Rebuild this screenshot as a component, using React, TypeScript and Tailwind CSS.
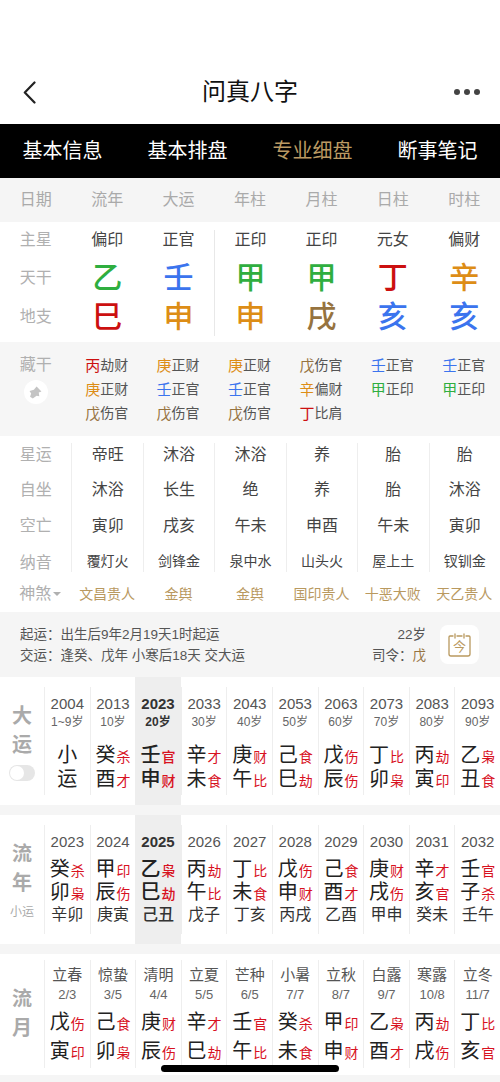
const FONT = "font-['Liberation_Sans','Noto_Sans_CJK_SC',sans-serif]";

const GREEN = "text-[#2fae3f]";
const BLUE = "text-[#3b74ee]";
const RED = "text-[#cc1010]";
const ORANGE = "text-[#dd8d16]";
const BROWN = "text-[#96733f]";

const COLUMNS = ["流年", "大运", "年柱", "月柱", "日柱", "时柱"];
const STARS = ["偏印", "正官", "正印", "正印", "元女", "偏财"];
const STEMS: [string, string][] = [["乙", GREEN], ["壬", BLUE], ["甲", GREEN], ["甲", GREEN], ["丁", RED], ["辛", ORANGE]];
const BRANCHES: [string, string][] = [["巳", RED], ["申", ORANGE], ["申", ORANGE], ["戌", BROWN], ["亥", BLUE], ["亥", BLUE]];

const HIDDEN: [string, string, string][][] = [
  [["丙", RED, "劫财"], ["庚", ORANGE, "正财"], ["戊", BROWN, "伤官"]],
  [["庚", ORANGE, "正财"], ["壬", BLUE, "正官"], ["戊", BROWN, "伤官"]],
  [["庚", ORANGE, "正财"], ["壬", BLUE, "正官"], ["戊", BROWN, "伤官"]],
  [["戊", BROWN, "伤官"], ["辛", ORANGE, "偏财"], ["丁", RED, "比肩"]],
  [["壬", BLUE, "正官"], ["甲", GREEN, "正印"]],
  [["壬", BLUE, "正官"], ["甲", GREEN, "正印"]],
];

const LOWER = [
  { label: "星运", size: "text-[16px]", cell: "mt-[7px] pb-[7px]", values: ["帝旺", "沐浴", "沐浴", "养", "胎", "胎"] },
  { label: "自坐", size: "text-[16px]", cell: "", values: ["沐浴", "长生", "绝", "养", "胎", "沐浴"] },
  { label: "空亡", size: "text-[16px]", cell: "", values: ["寅卯", "戌亥", "午未", "申酉", "午未", "寅卯"] },
  { label: "纳音", size: "text-[14px]", cell: "mb-[9px] pt-[7px]", values: ["覆灯火", "剑锋金", "泉中水", "山头火", "屋上土", "钗钏金"] },
];
const SHENSHA = ["文昌贵人", "金舆", "金舆", "国印贵人", "十恶大败", "天乙贵人"];

type Cell = { top: string; sub: string; a: string; ag: string; b: string; bg: string; c?: string; on?: boolean };

const DAYUN: Cell[] = [
  { top: "2004", sub: "1~9岁", a: "小", ag: "", b: "运", bg: "" },
  { top: "2013", sub: "10岁", a: "癸", ag: "杀", b: "酉", bg: "才" },
  { top: "2023", sub: "20岁", a: "壬", ag: "官", b: "申", bg: "财", on: true },
  { top: "2033", sub: "30岁", a: "辛", ag: "才", b: "未", bg: "食" },
  { top: "2043", sub: "40岁", a: "庚", ag: "财", b: "午", bg: "比" },
  { top: "2053", sub: "50岁", a: "己", ag: "食", b: "巳", bg: "劫" },
  { top: "2063", sub: "60岁", a: "戊", ag: "伤", b: "辰", bg: "伤" },
  { top: "2073", sub: "70岁", a: "丁", ag: "比", b: "卯", bg: "枭" },
  { top: "2083", sub: "80岁", a: "丙", ag: "劫", b: "寅", bg: "印" },
  { top: "2093", sub: "90岁", a: "乙", ag: "枭", b: "丑", bg: "食" },
];

const LIUNIAN: Cell[] = [
  { top: "2023", sub: "", a: "癸", ag: "杀", b: "卯", bg: "枭", c: "辛卯" },
  { top: "2024", sub: "", a: "甲", ag: "印", b: "辰", bg: "伤", c: "庚寅" },
  { top: "2025", sub: "", a: "乙", ag: "枭", b: "巳", bg: "劫", c: "己丑", on: true },
  { top: "2026", sub: "", a: "丙", ag: "劫", b: "午", bg: "比", c: "戊子" },
  { top: "2027", sub: "", a: "丁", ag: "比", b: "未", bg: "食", c: "丁亥" },
  { top: "2028", sub: "", a: "戊", ag: "伤", b: "申", bg: "财", c: "丙戌" },
  { top: "2029", sub: "", a: "己", ag: "食", b: "酉", bg: "才", c: "乙酉" },
  { top: "2030", sub: "", a: "庚", ag: "财", b: "戌", bg: "伤", c: "甲申" },
  { top: "2031", sub: "", a: "辛", ag: "才", b: "亥", bg: "官", c: "癸未" },
  { top: "2032", sub: "", a: "壬", ag: "官", b: "子", bg: "杀", c: "壬午" },
];

const LIUYUE: Cell[] = [
  { top: "立春", sub: "2/3", a: "戊", ag: "伤", b: "寅", bg: "印" },
  { top: "惊蛰", sub: "3/5", a: "己", ag: "食", b: "卯", bg: "枭" },
  { top: "清明", sub: "4/4", a: "庚", ag: "财", b: "辰", bg: "伤" },
  { top: "立夏", sub: "5/5", a: "辛", ag: "才", b: "巳", bg: "劫" },
  { top: "芒种", sub: "6/5", a: "壬", ag: "官", b: "午", bg: "比" },
  { top: "小暑", sub: "7/7", a: "癸", ag: "杀", b: "未", bg: "食" },
  { top: "立秋", sub: "8/7", a: "甲", ag: "印", b: "申", bg: "财" },
  { top: "白露", sub: "9/7", a: "乙", ag: "枭", b: "酉", bg: "才" },
  { top: "寒露", sub: "10/8", a: "丙", ag: "劫", b: "戌", bg: "伤" },
  { top: "立冬", sub: "11/7", a: "丁", ag: "比", b: "亥", bg: "官" },
];

function Ganzhi({ char, god, rowClass }: { char: string; god: string; rowClass: string }) {
  return (
    <div className={`flex items-end justify-center gap-[1px] ${rowClass}`}>
      <span className="text-[20px] leading-none text-[#222]">{char}</span>
      {god && <span className="text-[14px] leading-none mb-[1px] text-[#d8121f]">{god}</span>}
    </div>
  );
}

function Band({ title, height, children }: { title: React.ReactNode; height: string; children: React.ReactNode }) {
  return (
    <section className={`grid grid-cols-[44px_repeat(10,1fr)] bg-white py-[10px] ${height}`}>
      <div className="flex flex-col items-center justify-center text-[#aaa]">{title}</div>
      {children}
    </section>
  );
}

function DayunCell({ cell }: { cell: Cell }) {
  return (
    <div className={`border-l border-[#eee] text-center ${cell.on ? "-my-[10px] pt-[18px] pb-[10px] bg-[#eeeeee] border-l-0" : "pt-[8px]"}`}>
      <div className={`text-[15px] leading-[17px] ${cell.on ? "font-bold text-[#333]" : "text-[#555]"}`}>{cell.top}</div>
      <div className={`text-[12px] leading-[16px] mt-[2px] ${cell.on ? "font-bold text-[#333]" : "text-[#666]"}`}>{cell.sub}</div>
      <div className={`mt-[11px] ${cell.on ? "font-medium" : ""}`}>
        <Ganzhi char={cell.a} god={cell.ag} rowClass="h-[24px]" />
        <Ganzhi char={cell.b} god={cell.bg} rowClass="h-[24px]" />
      </div>
    </div>
  );
}

function LiunianCell({ cell }: { cell: Cell }) {
  return (
    <div className={`border-l border-[#eee] text-center ${cell.on ? "-my-[10px] pt-[18px] pb-[10px] bg-[#eeeeee] border-l-0 font-medium" : "pt-[8px]"}`}>
      <div className={`text-[15px] leading-[17px] ${cell.on ? "font-bold text-[#333]" : "text-[#555]"}`}>{cell.top}</div>
      <div className="mt-[5px]">
        <Ganzhi char={cell.a} god={cell.ag} rowClass="h-[24px]" />
        <Ganzhi char={cell.b} god={cell.bg} rowClass="h-[23px]" />
      </div>
      <div className="text-[16px] leading-[20px] mt-[3px] text-[#333]">{cell.c}</div>
    </div>
  );
}

function LiuyueCell({ cell }: { cell: Cell }) {
  return (
    <div className="border-l border-[#eee] text-center pt-[6px]">
      <div className="text-[15px] leading-[18px] text-[#555]">{cell.top}</div>
      <div className="text-[13px] leading-[16px] mt-[3px] text-[#666]">{cell.sub}</div>
      <div className="mt-[5px]">
        <Ganzhi char={cell.a} god={cell.ag} rowClass="h-[24px]" />
        <Ganzhi char={cell.b} god={cell.bg} rowClass="h-[24px] mt-[5px]" />
      </div>
    </div>
  );
}

export default function App() {
  return (
    <div className={`relative w-[500px] h-[1082px] overflow-hidden bg-[#f5f5f5] ${FONT}`}>
      {/* Nav */}
      <header className="bg-white h-[124px] pt-[60px]">
        <div className="h-[64px] grid grid-cols-[1fr_auto_1fr] items-center pl-[23px] pr-[20px]">
          <svg width="13" height="23" viewBox="0 0 13 23" fill="none" stroke="#222" strokeWidth="2.2" strokeLinecap="round" strokeLinejoin="round">
            <path d="M11.5 1.5 L1.8 11.5 L11.5 21.5" />
          </svg>
          <h1 className="text-[24px] leading-none text-[#111] pr-[3px]">问真八字</h1>
          <div className="flex gap-[4px] justify-end">
            <span className="w-[6px] h-[6px] rounded-full bg-[#444]" />
            <span className="w-[6px] h-[6px] rounded-full bg-[#444]" />
            <span className="w-[6px] h-[6px] rounded-full bg-[#444]" />
          </div>
        </div>
      </header>

      {/* Tabs */}
      <nav className="grid grid-cols-4 h-[54px] items-center bg-black text-center text-[20px] text-white">
        <span>基本信息</span>
        <span>基本排盘</span>
        <span className="text-[#bb9a63]">专业细盘</span>
        <span>断事笔记</span>
      </nav>

      {/* Column heads */}
      <div className="grid grid-cols-7 h-[44px] items-center bg-[#f5f5f5] text-center text-[16px] text-[#aaa]">
        <span>日期</span>
        {COLUMNS.map((c) => (
          <span key={c}>{c}</span>
        ))}
      </div>

      {/* Pillars */}
      <div className="bg-white h-[120px] grid grid-cols-7 grid-rows-[36px_39px_39px] text-center">
        <span className="flex items-center justify-center text-[16px] text-[#b0b0b0]">主星</span>
        {STARS.map((s, i) => (
          <span key={i} className={`flex items-center justify-center text-[16px] text-[#444] ${i === 2 ? "border-l border-[#e8e8e8] mt-[8px] pb-[8px]" : ""}`}>{s}</span>
        ))}
        <span className="flex items-center justify-center text-[16px] text-[#b0b0b0]">天干</span>
        {STEMS.map(([c, color], i) => (
          <span key={i} className={`flex items-center justify-center text-[30px] leading-none font-medium ${color} ${i === 2 ? "border-l border-[#e8e8e8]" : ""}`}>{c}</span>
        ))}
        <span className="flex items-center justify-center text-[16px] text-[#b0b0b0]">地支</span>
        {BRANCHES.map(([c, color], i) => (
          <span key={i} className={`flex items-center justify-center text-[30px] leading-none font-medium ${color} ${i === 2 ? "border-l border-[#e8e8e8]" : ""}`}>{c}</span>
        ))}
      </div>

      {/* Hidden stems */}
      <div className="grid grid-cols-7 h-[94px] bg-[#f6f6f6] pt-[11px] text-center">
        <div className="flex flex-col items-center">
          <span className="text-[16px] leading-[24px] text-[#b0b0b0]">藏干</span>
          <span className="mt-[3px] w-[24px] h-[24px] rounded-full bg-white flex items-center justify-center">
            <svg width="13" height="13" viewBox="0 0 24 24" fill="#c4c4c4">
              <path d="M14 1 L23 10 L18 12 L19 19 L14 18 L7 23 L2 20 L4 14 L1 9 L9 7 Z" />
            </svg>
          </span>
        </div>
        {HIDDEN.map((col, i) => (
          <div key={i} className="flex flex-col items-center">
            {col.map(([stem, color, god], j) => (
              <div key={j} className="w-[44px] h-[24px] flex items-center whitespace-nowrap">
                <span className={`text-[15px] leading-none ${color}`}>{stem}</span>
                <span className="text-[14px] leading-none text-[#555]">{god}</span>
              </div>
            ))}
          </div>
        ))}
      </div>

      {/* Lower rows */}
      <div className="bg-white h-[176px]">
        {LOWER.map((row) => (
          <div key={row.label} className="grid grid-cols-7 h-[36px] text-center">
            <span className="flex items-center justify-center text-[16px] text-[#b0b0b0]">{row.label}</span>
            {row.values.map((v, i) => (
              <span key={i} className={`flex items-center justify-center border-l-[1.5px] border-[#eee] text-[#444] ${row.size} ${row.cell}`}>{v}</span>
            ))}
          </div>
        ))}
        <div className="grid grid-cols-7 h-[26px] mt-[1px] items-center text-center">
          <span className="flex items-center justify-center gap-[2px] pl-[9px] text-[16px] text-[#b0b0b0]">
            神煞
            <span className="w-0 h-0 border-x-[4px] border-x-transparent border-t-[4px] border-t-[#b0b0b0]" />
          </span>
          {SHENSHA.map((s, i) => (
            <span key={i} className="text-[14px] text-[#b9995f] whitespace-nowrap">{s}</span>
          ))}
        </div>
      </div>

      {/* Qiyun info */}
      <div className="h-[65px] flex items-center pl-[20px] pr-[21px] text-[13.5px] leading-[21px] text-[#555]">
        <div className="flex-1 pt-[1px]">
          <p>起运：出生后9年2月19天1时起运</p>
          <p>交运：逢癸、戊年 小寒后18天 交大运</p>
        </div>
        <div className="text-right mr-[14px] pt-[1px]">
          <p>22岁</p>
          <p>司令：<span className="text-[#96733f]">戊</span></p>
        </div>
        <div className="relative w-[39px] h-[39px] rounded-[8px] bg-white flex items-center justify-center">
          <svg width="23" height="24" viewBox="0 0 23 24" fill="none" stroke="#b9995f" strokeWidth="1.3" strokeLinecap="round">
            <path d="M5 3 H2 Q1 3 1 4 V21 Q1 23 3 23 H20 Q22 23 22 21 V4 Q22 3 21 3 H18 M9 3 H14 M7 1 V5 M16 1 V5" />
          </svg>
          <span className="absolute inset-0 pt-[3px] flex items-center justify-center text-[13px] leading-none text-[#b9995f]">今</span>
        </div>
      </div>

      {/* Dayun */}
      <Band
        height="h-[128px]"
        title={
          <>
            <span className="text-[20px] leading-[29px] font-bold">大</span>
            <span className="text-[20px] leading-[29px] font-bold">运</span>
            <span className="mt-[5px] w-[26px] h-[16px] rounded-full bg-[#e6e6e6] flex items-center">
              <span className="w-[14px] h-[14px] ml-[1px] rounded-full bg-white" />
            </span>
          </>
        }
      >
        {DAYUN.map((c) => (
          <DayunCell key={c.top} cell={c} />
        ))}
      </Band>

      <div className="h-[10px]" />

      {/* Liunian */}
      <Band
        height="h-[129px]"
        title={
          <>
            <span className="text-[20px] leading-[29px] font-bold">流</span>
            <span className="text-[20px] leading-[29px] font-bold">年</span>
            <span className="mt-[6px] text-[12px] leading-[16px]">小运</span>
          </>
        }
      >
        {LIUNIAN.map((c) => (
          <LiunianCell key={c.top} cell={c} />
        ))}
      </Band>

      <div className="h-[10px]" />

      {/* Liuyue */}
      <section className="grid grid-cols-[44px_repeat(10,1fr)] bg-white h-[121px] pt-[6px] pb-[7px]">
        <div className="flex flex-col items-center justify-center text-[#aaa]">
          <span className="text-[20px] leading-[29px] font-bold">流</span>
          <span className="text-[20px] leading-[29px] font-bold">月</span>
        </div>
        {LIUYUE.map((c) => (
          <LiuyueCell key={c.top} cell={c} />
        ))}
      </section>

      {/* Home indicator */}
      <div className="absolute left-[161px] top-[1065px] w-[178px] h-[7px] rounded-full bg-black" />
    </div>
  );
}
